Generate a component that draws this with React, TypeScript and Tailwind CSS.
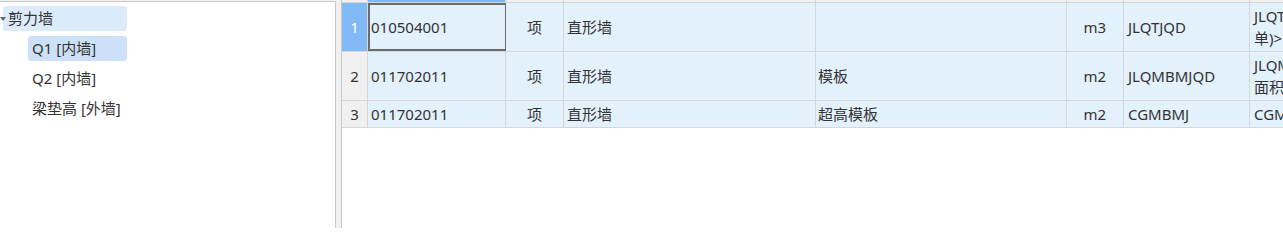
import React from "react";

const font = { fontFamily: '"Noto Sans", "Noto Sans CJK SC", sans-serif' };

type Row = {
  n: string;
  code: string;
  kind: string;
  name: string;
  feat: string;
  unit: string;
  expr: string;
  last1: string;
  last2: string;
};

const rows: Row[] = [
  { n: "1", code: "010504001", kind: "项", name: "直形墙", feat: "", unit: "m3", expr: "JLQTJQD", last1: "JLQTJQD<体积(清", last2: "单)>" },
  { n: "2", code: "011702011", kind: "项", name: "直形墙", feat: "模板", unit: "m2", expr: "JLQMBMJQD", last1: "JLQMBMJQD<模板", last2: "面积>" },
  { n: "3", code: "011702011", kind: "项", name: "直形墙", feat: "超高模板", unit: "m2", expr: "CGMBMJ", last1: "CGMBMJ<超高模板面积>", last2: "" },
];

export default function App() {
  return (
    <div className="flex h-[228px] w-[1283px] overflow-hidden bg-[#f0f0f0] text-[15px] text-[#333]" style={font}>
      {/* tree panel */}
      <div className="relative mt-[1px] h-[227px] w-[336px] shrink-0 border-t border-r border-[#c8c8c8] bg-white">
        <div className="ml-[3px] mt-[4px] flex h-[25px] w-[124px] items-center rounded-[3px] bg-[#dcebfc] pl-[5px]">
          剪力墙
        </div>
        <div className="absolute left-0 top-[15px] h-0 w-0 border-l-[3px] border-r-[3px] border-t-[4px] border-l-transparent border-r-transparent border-t-[#666]" />
        <div className="ml-[28px] mt-[5px] flex h-[25px] w-[99px] items-center rounded-[3px] bg-[#cce1f8] pl-[4px]">
          Q1 [内墙]
        </div>
        <div className="ml-[28px] mt-[5px] flex h-[25px] items-center pl-[4px]">Q2 [内墙]</div>
        <div className="ml-[28px] mt-[5px] flex h-[25px] items-center pl-[4px]">梁垫高 [外墙]</div>
      </div>
      {/* splitter */}
      <div className="w-[5px] shrink-0" />
      {/* grid */}
      <div className="relative h-[228px] flex-1 border-l border-[#c8c8c8] bg-white">
        {/* header remnant */}
        <div className="grid h-[3px] grid-cols-[26px_138px_58px_252px_251px_57px_126px_1fr] border-b border-[#d6d6d6] bg-[#f0f0f0]">
          <div className="border-r border-[#d6d6d6]" />
          <div className="border-r border-[#d6d6d6] bg-[#7fb8f4]" />
          <div className="border-r border-[#d6d6d6]" />
          <div className="border-r border-[#d6d6d6]" />
          <div className="border-r border-[#d6d6d6]" />
          <div className="border-r border-[#d6d6d6]" />
          <div className="border-r border-[#d6d6d6]" />
          <div />
        </div>
        {rows.map((r, i) => {
          const h = i === 2 ? "h-[27px]" : "h-[49px]";
          const sel = i === 0;
          return (
            <div
              key={r.n}
              className={`grid ${h} grid-cols-[26px_138px_58px_252px_251px_57px_126px_1fr] border-b border-[#d6d6d6]`}
            >
              <div
                className={`flex items-center justify-center border-r border-[#d6d6d6] ${
                  sel ? "bg-[#80b9f5] text-white" : "bg-[#f0f0f0] text-[#333]"
                }`}
              >
                {r.n}
              </div>
              <div
                className={`flex items-center border-r bg-[#e3f1fd] ${
                  sel ? "border-2 border-[#6b6b6b] pl-[1px]" : "border-[#d6d6d6] pl-[3px]"
                }`}
              >
                {r.code}
              </div>
              <div className="flex items-center justify-center border-r border-[#d6d6d6] bg-[#e3f1fd]">{r.kind}</div>
              <div className="flex items-center border-r border-[#d6d6d6] bg-[#e3f1fd] pl-[3px]">{r.name}</div>
              <div className="flex items-center border-r border-[#d6d6d6] bg-[#e3f1fd] pl-[2px]">{r.feat}</div>
              <div className="flex items-center justify-end border-r border-[#d6d6d6] bg-[#e3f1fd] pr-[17px]">{r.unit}</div>
              <div className="flex items-center border-r border-[#d6d6d6] bg-[#e3f1fd] pl-[4px]">{r.expr}</div>
              <div className="flex flex-col justify-center overflow-hidden whitespace-nowrap bg-[#e3f1fd] pl-[4px] leading-[22px]">
                <span>{r.last1}</span>
                {r.last2 && <span>{r.last2}</span>}
              </div>
            </div>
          );
        })}
      </div>
    </div>
  );
}
